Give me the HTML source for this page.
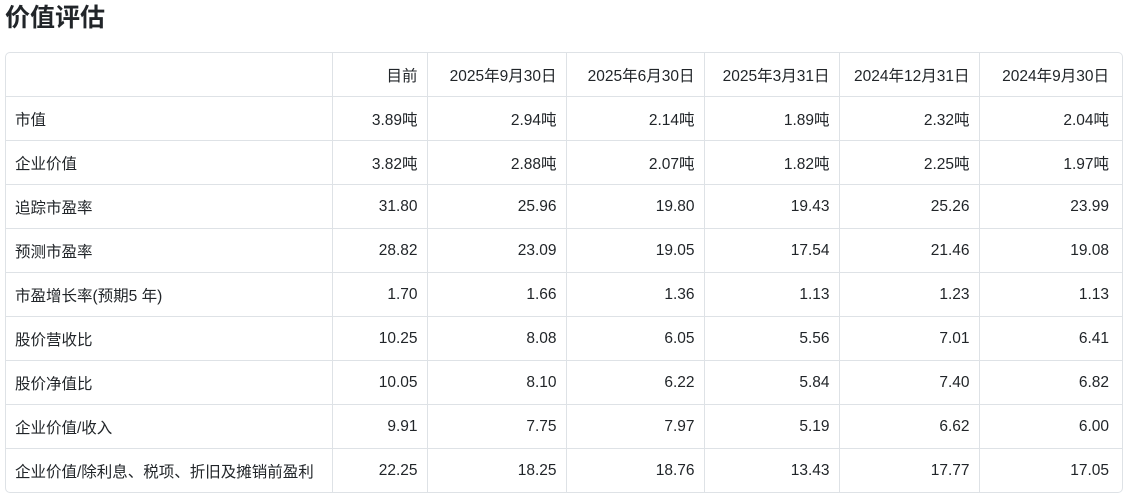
<!DOCTYPE html>
<html><head><meta charset="utf-8"><style>
body{margin:0;background:#fff;font-family:"Liberation Sans","Noto Sans CJK SC",sans-serif;color:#212529;}
h1{position:absolute;left:5px;top:0;margin:0;font-size:25px;line-height:36px;font-weight:bold;color:#212529;}
.wrap{position:absolute;left:5px;top:52px;width:1116px;border:1px solid #dee2e6;border-radius:5px;overflow:hidden;}
table{border-collapse:collapse;width:1116px;table-layout:fixed;font-size:15.5px;}
td{height:43px;border-right:1px solid #dee2e6;border-bottom:1px solid #dee2e6;text-align:right;padding:0 9px;white-space:nowrap;}
tr td:first-child{text-align:left;}
tr td:last-child{border-right:none;padding-right:13px;}
tr:last-child td{border-bottom:none;}
</style></head><body>
<h1>价值评估</h1>
<div class="wrap"><table>
<colgroup><col style="width:326px"><col style="width:95px"><col style="width:139px"><col style="width:138px"><col style="width:135px"><col style="width:140px"><col style="width:143px"></colgroup>
<tr><td></td><td>目前</td><td>2025年9月30日</td><td>2025年6月30日</td><td>2025年3月31日</td><td>2024年12月31日</td><td>2024年9月30日</td></tr>
<tr><td>市值</td><td>3.89吨</td><td>2.94吨</td><td>2.14吨</td><td>1.89吨</td><td>2.32吨</td><td>2.04吨</td></tr>
<tr><td>企业价值</td><td>3.82吨</td><td>2.88吨</td><td>2.07吨</td><td>1.82吨</td><td>2.25吨</td><td>1.97吨</td></tr>
<tr><td>追踪市盈率</td><td>31.80</td><td>25.96</td><td>19.80</td><td>19.43</td><td>25.26</td><td>23.99</td></tr>
<tr><td>预测市盈率</td><td>28.82</td><td>23.09</td><td>19.05</td><td>17.54</td><td>21.46</td><td>19.08</td></tr>
<tr><td>市盈增长率(预期5 年)</td><td>1.70</td><td>1.66</td><td>1.36</td><td>1.13</td><td>1.23</td><td>1.13</td></tr>
<tr><td>股价营收比</td><td>10.25</td><td>8.08</td><td>6.05</td><td>5.56</td><td>7.01</td><td>6.41</td></tr>
<tr><td>股价净值比</td><td>10.05</td><td>8.10</td><td>6.22</td><td>5.84</td><td>7.40</td><td>6.82</td></tr>
<tr><td>企业价值/收入</td><td>9.91</td><td>7.75</td><td>7.97</td><td>5.19</td><td>6.62</td><td>6.00</td></tr>
<tr><td>企业价值/除利息、税项、折旧及摊销前盈利</td><td>22.25</td><td>18.25</td><td>18.76</td><td>13.43</td><td>17.77</td><td>17.05</td></tr>
</table></div>
</body></html>
